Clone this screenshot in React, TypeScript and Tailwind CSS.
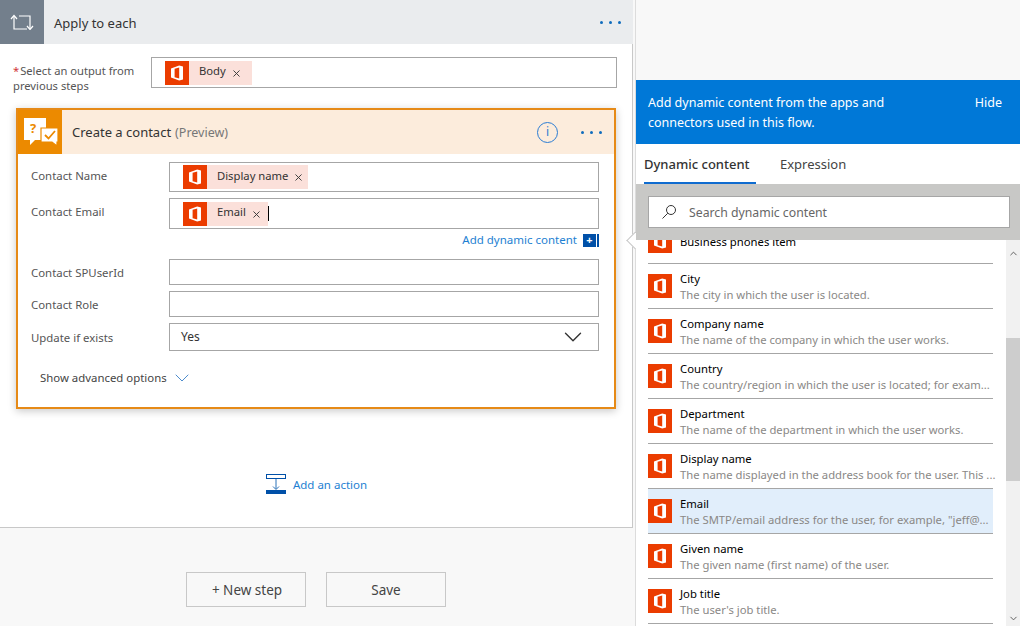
import React from 'react';
import { ChevronDown, ChevronUp, X } from 'lucide-react';

const font = { fontFamily: '"Noto Sans", "Open Sans", sans-serif' };

const OfficeIcon = () => (
  <div className="w-6 h-6 shrink-0 bg-[#eb3c00] flex items-center justify-center">
    <svg width="24" height="24" viewBox="0 0 24 24">
      <path
        fillRule="evenodd"
        fill="#fff"
        d="M6 7.600 14.200 4.500l3.800 1.100v12.800L14.200 19.500 6 16.400ZM14.200 6.600 9.600 7.800v8.400l4.600 1.200Z"
      />
    </svg>
  </div>
);

const Token = ({ label, pad }: { label: string; pad: string }) => (
  <div className={`flex items-center h-6 bg-[#fbe0da] ${pad}`}>
    <OfficeIcon />
    <span className="ml-[10px] text-[11.25px] text-[#333] -mt-[2px]">{label}</span>
    <X size={11} strokeWidth={2} className="ml-[5px] mt-px text-[#333]" />
  </div>
);

const Field = ({ label, h, labelCls, children }: { label: string; h: string; labelCls: string; children?: React.ReactNode }) => (
  <div className="flex items-center">
    <div className={`w-[138px] shrink-0 text-[11.4px] text-[#555] ${labelCls}`}>{label}</div>
    <div className={`w-[430px] border border-[#a6a6a6] flex items-center pl-[13px] ${h}`}>{children}</div>
  </div>
);

const items = [
  { name: 'Business phones item', desc: '' },
  { name: 'City', desc: 'The city in which the user is located.' },
  { name: 'Company name', desc: 'The name of the company in which the user works.' },
  { name: 'Country', desc: 'The country/region in which the user is located; for exam...' },
  { name: 'Department', desc: 'The name of the department in which the user works.' },
  { name: 'Display name', desc: 'The name displayed in the address book for the user. This ...' },
  { name: 'Email', desc: 'The SMTP/email address for the user, for example, "jeff@...', active: true },
  { name: 'Given name', desc: 'The given name (first name) of the user.' },
  { name: 'Job title', desc: "The user's job title." },
];

const DynamicRow = ({ name, desc, active }: { name: string; desc: string; active?: boolean }) => (
  <div className={`h-[45px] shrink-0 w-[345px] flex items-center border-b border-[#a6a6a6] ${active ? 'bg-[#e1eefb]' : ''}`}>
    <OfficeIcon />
    <div className="ml-2 min-w-0 mt-[1px]">
      <div className="text-[11.3px] leading-4 text-black">{name}</div>
      <div className="text-[11.25px] leading-4 text-[#8a8886] whitespace-nowrap">{desc}</div>
    </div>
  </div>
);

const Dots = () => (
  <div className="flex gap-[6px]">
    <span className="w-[3px] h-[3px] rounded-full bg-[#0f6cbd]" />
    <span className="w-[3px] h-[3px] rounded-full bg-[#0f6cbd]" />
    <span className="w-[3px] h-[3px] rounded-full bg-[#0f6cbd]" />
  </div>
);

export default function App() {
  return (
    <div className="relative w-[1020px] h-[626px] overflow-hidden flex bg-[#f8f8f8]" style={font}>
      {/* Flow designer */}
      <div className="w-[633px] shrink-0 flex flex-col">
        <div className="h-11 flex items-center bg-[#eaecee]">
          <div className="w-11 h-11 bg-[#737f8c] flex items-center justify-center">
            <svg width="24" height="16" viewBox="0 0 24 16" fill="none" stroke="#fff" strokeWidth="1.200">
              <path d="M4 2v13h13" />
              <path d="M1 5 4 1.500 7 5" />
              <path d="M9 2h11v13" />
              <path d="M17 12l3 3.500 3-3.500" />
            </svg>
          </div>
          <span className="ml-[10px] text-[13px] text-[#333] mt-[3px]">Apply to each</span>
          <div className="ml-auto mr-[12px]"><Dots /></div>
        </div>

        <div className="h-[484px] bg-white border-b border-r border-[#c8c8c8] flex flex-col">
          <div className="flex items-start pl-[13px] pt-[13px] h-[44px] shrink-0">
            <div className="w-[138px] shrink-0 text-[11.2px] leading-[15px] text-[#555] pt-[6px]">
              <span className="text-[#d13438] mr-px">*</span>Select an output from previous steps
            </div>
            <div className="w-[466px] h-[31px] border border-[#a6a6a6] flex items-center pl-[13px]">
              <Token label="Body" pad="pr-[10px]" />
            </div>
          </div>

          <div className="mt-5 ml-4 w-[600px] h-[301px] shrink-0 border-2 border-[#e68a17] shadow-[0_2px_8px_rgba(0,0,0,0.22)] flex flex-col">
            <div className="h-11 bg-[#fcecdc] flex items-center shrink-0">
              <div className="w-11 h-11 bg-[#ec8a00] flex items-center justify-center">
                <svg width="36" height="28" viewBox="0 0 36 28">
                  <path fill="#fff" d="M2 0h22v22H13l-5 5v-5H2Z" />
                  <text x="11" y="15" fontSize="13" fontWeight="700" fill="#ec8a00" textAnchor="middle" fontFamily="Noto Sans">?</text>
                  <path fill="#fff" stroke="#ec8a00" strokeWidth="1.200" d="M19 10h17v14h-1v4l-5-4H19Z" />
                  <path fill="none" stroke="#ec8a00" strokeWidth="1.800" d="M23 17l3.500 3.500L33 13" />
                </svg>
              </div>
              <span className="ml-[10px] text-[13px] text-[#333] mt-[2px]">Create a contact</span>
              <span className="ml-1 text-[12.5px] text-[#777] mt-[2px]">(Preview)</span>
              <div className="ml-auto w-[21px] h-[21px] rounded-full border-[1.5px] border-[#2b7cd3] flex items-center justify-center text-xs leading-none text-[#2b7cd3]">i</div>
              <div className="ml-[23px] mr-3"><Dots /></div>
            </div>

            <div className="flex-1 bg-white pl-[13px] pt-2 flex flex-col">
              <div className="flex flex-col gap-[6px]">
                <Field label="Contact Name" h="h-[30px]" labelCls="-mt-[2px]"><Token label="Display name" pad="pr-[4px]" /></Field>
                <Field label="Contact Email" h="h-[31px]" labelCls="-mt-[4px]">
                  <Token label="Email" pad="pr-[6px]" />
                  <span className="w-px h-[15px] bg-black" />
                </Field>
              </div>
              <div className="w-[568px] h-[30px] flex items-start justify-end pt-[2px]">
                <span className="text-[11.5px] text-[#1e7fd2]">Add dynamic content</span>
                <div className="ml-[6px] mt-[3px] w-4 h-[13px] flex">
                  <div className="w-[13px] h-[13px] bg-[#0050a8] text-white text-[11px] leading-[12px] text-center font-bold">+</div>
                  <div className="ml-px w-[2px] h-[13px] bg-[#0050a8]" />
                </div>
              </div>
              <div className="flex flex-col gap-[6px]">
                <Field label="Contact SPUserId" h="h-[26px]" labelCls="mt-[2px]" />
                <Field label="Contact Role" h="h-[26px]" labelCls="mt-[1px]" />
                <Field label="Update if exists" h="h-[28px]" labelCls="mt-[1px]">
                  <span className="text-xs text-[#333] -ml-[2px]">Yes</span>
                  <ChevronDown size={30} strokeWidth={1.100} className="ml-auto mr-[10px] text-[#333]" />
                </Field>
              </div>
              <div className="flex items-center ml-[9px] mt-[15px] h-[24px]">
                <span className="text-[11.4px] text-[#444]">Show advanced options</span>
                <ChevronDown size={24} strokeWidth={0.800} className="ml-[3px] text-[#1f6fc0]" />
              </div>
            </div>
          </div>

          <div className="mt-[65px] flex items-center justify-center pl-[1px]">
            <svg width="20" height="20" viewBox="0 0 20 20" fill="none">
              <rect x="0.500" y="0.500" width="19" height="4" stroke="#0050a8" />
              <path d="M10 5v10M7 12.500l3 3 3-3" stroke="#2b72b8" />
              <rect x="0" y="16" width="20" height="4" fill="#0050a8" />
            </svg>
            <span className="ml-[7px] mt-[2px] text-[11.5px] text-[#1e7fd2]">Add an action</span>
          </div>
        </div>

        <div className="flex-1 flex justify-center gap-5 pt-[44px] pr-[1px]">
          <button className="w-[120px] h-[35px] pt-[2px] pl-[2px] border border-[#c8c8c8] text-[13.500px] text-[#444]">+ New step</button>
          <button className="w-[120px] h-[35px] pt-[2px] border border-[#c8c8c8] text-[13.500px] text-[#444]">Save</button>
        </div>
      </div>

      {/* Dynamic content panel */}
      <div className="ml-[2px] w-[385px] flex flex-col pt-20 border-l border-[#dcdcdc]">
        <div className="h-16 bg-[#0078d7] flex items-start justify-between pl-3 pr-[18px] pt-[13px] text-white text-[12.500px] leading-5 shrink-0">
          <div className="w-[280px]">Add dynamic content from the apps and connectors used in this flow.</div>
          <span>Hide</span>
        </div>
        <div className="h-10 bg-white flex items-stretch pl-2 text-[13px] shrink-0">
          <div className="pt-[3px] flex items-center border-b-2 border-[#0f6cd0] text-[#333] font-medium w-[112px]">Dynamic content</div>
          <div className="pt-[1px] ml-6 flex items-center text-[#444]">Expression</div>
        </div>
        <div className="h-14 bg-[#c8c8c6] pl-3 pr-[10px] flex items-center shrink-0">
          <div className="w-full h-8 bg-white border border-[#a6a6a6] flex items-center pl-[12px]">
            <svg width="16" height="16" viewBox="0 0 16 16" fill="none" stroke="#333">
              <circle cx="10" cy="6" r="4.500" />
              <path d="M6.800 9.200 1.500 14.500" />
            </svg>
            <span className="ml-[12px] text-[12.250px] text-[#666] mt-[3px]">Search dynamic content</span>
          </div>
        </div>
        <div className="flex-1 min-h-0 bg-white flex overflow-hidden">
          <div className="flex-1 pl-3 -mt-[21px] flex flex-col">
            {items.map((it) => <DynamicRow key={it.name} {...it} />)}
          </div>
          <div className="w-[14px] bg-[#f1f1f1] flex flex-col items-center">
            <ChevronUp size={11} strokeWidth={2} className="mt-[8px] text-[#555]" />
            <div className="mt-[79px] w-full h-[143px] bg-[#cdcdcd]" />
            <ChevronDown size={11} strokeWidth={2} className="mt-[132px] text-[#555]" />
          </div>
        </div>
      </div>

      {/* callout arrow, clipped at the panel edge */}
      <div className="absolute left-[626px] top-[228px] w-[10px] h-6 overflow-hidden">
        <div className="absolute left-[3px] top-[5.500px] w-[13px] h-[13px] rotate-45 bg-white border-l border-b border-[#c8c8c8]" />
      </div>
    </div>
  );
}
